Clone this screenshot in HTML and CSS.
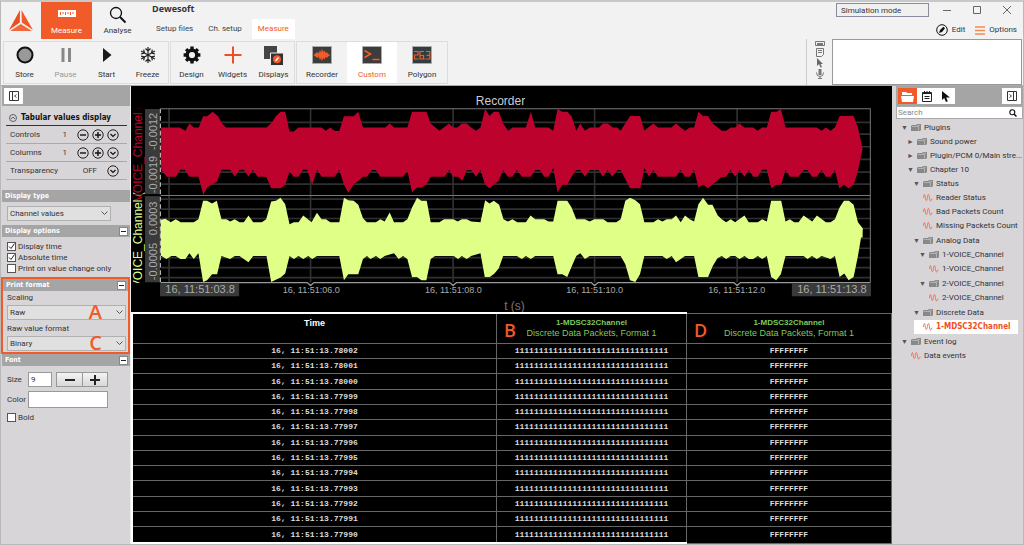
FILE: index.html
```html
<!DOCTYPE html>
<html lang="en">

<head>
    <meta charset="UTF-8">
    <meta name="viewport" content="width=device-width, initial-scale=1.0">
    <title>Dewesoft</title>
    <link rel="stylesheet" href="styles.css">
</head>

<body>
    <!-- icons used more than once -->
    <svg class="sprite" width="0" height="0">
        <symbol id="i-minus" viewBox="0 0 12 12"><circle cx="6" cy="6" r="5.2" fill="none" stroke="#222" /><path d="M3 6h6" stroke="#111" stroke-width="1.4" /></symbol>
        <symbol id="i-plus" viewBox="0 0 12 12"><circle cx="6" cy="6" r="5.2" fill="none" stroke="#222" /><path d="M3 6h6M6 3v6" stroke="#111" stroke-width="1.4" /></symbol>
        <symbol id="i-down" viewBox="0 0 12 12"><circle cx="6" cy="6" r="5.2" fill="none" stroke="#222" /><path d="M3.5 5L6 7.5L8.5 5" fill="none" stroke="#111" stroke-width="1.2" /></symbol>
        <symbol id="i-folder" viewBox="0 0 10 9"><path d="M0 3l1-1h4l1-1h4v6l-1 1H0z" fill="#888" /><path d="M1 3.500h6.500v4M6 2.300h3" fill="none" stroke="#c4c4c4" stroke-width=".7" /></symbol>
        <symbol id="i-wave" viewBox="0 0 10 9"><path d="M.5 5C.7 .5 2 .5 2.300 4.500S4 8.500 4.400 4.500S6 .5 6.400 4.500S8 9 8.400 6.500L9.500 6" fill="none" stroke="#ee6a4c" stroke-width=".9" /></symbol>
        <symbol id="i-panel" viewBox="0 0 10 10"><path d="M.5.5h9v9h-9zM3.500.5v9" fill="none" stroke="#333" /><path d="M7.500 3.500L5.500 5L7.500 6.500" fill="none" stroke="#333" stroke-width=".9" /></symbol>
    </svg>

    <header class="header">
        <svg class="logo" viewBox="0 0 24 21"><path d="M11 0L10.800 12.500L0 20z" fill="#e8501f" /><path d="M12.500 0L12.800 12.500L24 20z" fill="#f15a29" /><path d="M1 21L11.800 14L23 21z" fill="#f0683c" /></svg>
        <nav class="modes">
            <button class="mode active">
                <svg width="18" height="7" viewBox="0 0 18 7"><path d="M0 0h18v7H0z" fill="#fff" /><path d="M2.500 2v3M5 2v2M7.500 2v3M10 2v2M12.500 2v3M15 2v2" stroke="#f15a29" /></svg>
                <span>Measure</span>
            </button>
            <button class="mode">
                <svg width="18" height="18" viewBox="0 0 18 18"><circle cx="7" cy="7" r="5.500" fill="none" stroke="#111" stroke-width="1.3" /><path d="M11 11L16.500 16.500" stroke="#111" stroke-width="2" /></svg>
                <span>Analyse</span>
            </button>
        </nav>
        <div class="project">
            <h1>Dewesoft</h1>
            <nav class="tabs">
                <a href="#">Setup files</a>
                <a href="#">Ch. setup</a>
                <a href="#" class="active">Measure</a>
            </nav>
        </div>
        <div class="window">
            <div class="window-bar">
                <input type="text" value="Simulation mode" aria-label="Operation mode" readonly>
                <button aria-label="Minimize"><svg width="8" height="8"><path d="M0 4.500h8" stroke="#666" /></svg></button>
                <button aria-label="Maximize"><svg width="8" height="8"><path d="M.5.5h7v7h-7z" fill="none" stroke="#666" /></svg></button>
                <button aria-label="Close"><svg width="8" height="8"><path d="M0 0L8 8M8 0L0 8" stroke="#666" /></svg></button>
            </div>
            <div class="window-menu">
                <button><svg width="12" height="12" viewBox="0 0 12 12"><circle cx="6" cy="6" r="5.300" fill="none" stroke="#111" /><path d="M3 9L4 6L7.500 2.800L9 4.300L6 8z" fill="#111" /></svg>Edit</button>
                <button><svg width="10" height="9"><path d="M0 1h10M0 4.500h10M0 8h10" stroke="#f58a55" stroke-width="1.500" /></svg>Options</button>
            </div>
        </div>
    </header>

    <div class="toolbar">
        <div class="group">
            <button><svg width="18" height="18" viewBox="0 0 18 18"><circle cx="9" cy="9" r="7.500" fill="#999" stroke="#111" stroke-width="2" /></svg><span>Store</span></button>
            <button class="disabled"><svg width="18" height="18" viewBox="0 0 18 18"><path d="M4.500 2h3v14h-3zM11 2h3v14h-3z" fill="#888" /></svg><span>Pause</span></button>
            <button><svg width="18" height="18" viewBox="0 0 18 18"><path d="M5 2L13.500 9L5 16z" fill="#1a1a1a" /></svg><span>Start</span></button>
            <button><svg width="18" height="18" viewBox="0 0 18 18"><g fill="none" stroke="#222" stroke-width="1.2"><path id="arm" d="M9 1v16M6.500 2.500L9 5L11.500 2.500M6.500 15.500L9 13L11.500 15.500" /><use href="#arm" transform="rotate(60 9 9)" /><use href="#arm" transform="rotate(120 9 9)" /></g></svg><span>Freeze</span></button>
        </div>
        <div class="group">
            <button><svg width="18" height="18" viewBox="0 0 18 18"><circle cx="9" cy="9" r="4.800" fill="none" stroke="#111" stroke-width="3.400" /><path d="M9 .6v3M9 14.400v3M.6 9h3M14.400 9h3M3.100 3.100l2 2M12.900 12.900l2 2M14.900 3.100l-2 2M5.100 12.900l-2 2" stroke="#111" stroke-width="3.400" /></svg><span>Design</span></button>
            <button><svg width="18" height="18" viewBox="0 0 18 18"><path d="M9 .5v17M.5 9h17" stroke="#f04f23" stroke-width="2" /></svg><span>Widgets</span></button>
            <button><svg width="20" height="20" viewBox="0 0 20 20"><path d="M0 0h13v13H0z" fill="#444" /><path d="M6.500 7h13v12.500h-13z" fill="#333" stroke="#eee" /><circle cx="13" cy="13.200" r="4" fill="#f15a29" /><path d="M11.500 15L14.500 11.500" stroke="#fff" stroke-width="1.200" /></svg><span>Displays</span></button>
        </div>
        <div class="group wide">
            <button><svg width="20" height="18" viewBox="0 0 20 18"><path d="M.5.5h19v17H.5z" fill="#3c3c3c" stroke="#aaa" /><path d="M1.500 9L4 7L5.500 6L6.500 7.500L8 4L9 6.500L10 2.500L11 6L12.500 4.500L13.500 7L15 6L16 8L18.500 9L16 10.500L15 12L13.500 11L12.500 13.500L11 12L10 15.500L9 12L8 14L6.500 10.500L5.500 12L4 11z" fill="#f15a29" /></svg><span>Recorder</span></button>
            <button class="active"><svg width="20" height="18" viewBox="0 0 20 18"><path d="M.5.5h19v17H.5z" fill="#3c3c3c" stroke="#aaa" /><path d="M2.500 4.500L8.500 8L2.500 11.500M10.500 13.500h7" fill="none" stroke="#f15a29" stroke-width="1.700" /></svg><span>Custom</span></button>
            <button><svg width="20" height="18" viewBox="0 0 20 18"><path d="M.5.5h19v17H.5z" fill="#333c3e" stroke="#aaa" /><path d="M2 5.500h4v3.500H2.500v4h4M12 5.500H8v7.500h3.500V9.500H8M12.800 12.500v1M14 5.500h3.800v7.500H14M14.500 9.300h3.300" fill="none" stroke="#f15a29" stroke-width="1.200" /></svg><span>Polygon</span></button>
        </div>
        <div class="notes">
            <svg width="12" height="42" viewBox="0 0 12 42" fill="none" stroke="#777"><path d="M1.500 2.500h9v4h-9zM3 4.500h6M3 5.500h6" /><path d="M2.500 9.500h7v6l-2 2h-5zM4 11.500h4M4 13.500h4" /><path d="M3 19v8l2-2 1.500 3.500L8 28l-1.500-3H9z" fill="#666" stroke="none" /><path d="M4.500 30h3v6h-3z" fill="#777" stroke="none" /><path d="M2.500 33.500q0 4 3.500 4t3.500-4M6 37.500v2.500M4 39.500h4" /></svg>
            <textarea aria-label="Notes"></textarea>
        </div>
    </div>

    <main class="workspace">
        <aside class="settings">
            <div class="side-bar"><button class="tool" aria-label="Collapse panel"><svg width="10" height="10"><use href="#i-panel" /></svg></button></div>

            <section class="widget">
                <h2><svg width="8" height="8" viewBox="0 0 8 8"><circle cx="4" cy="4" r="3.500" fill="none" stroke="#444" stroke-width=".8" /><path d="M2 5L4 3L6 5" fill="none" stroke="#444" stroke-width=".8" /></svg>Tabular values display</h2>
                <div class="prop"><span>Controls</span><output>1</output>
                    <button aria-label="Fewer controls"><svg width="12" height="12"><use href="#i-minus" /></svg></button><button aria-label="More controls"><svg width="12" height="12"><use href="#i-plus" /></svg></button><button aria-label="Controls list"><svg width="12" height="12"><use href="#i-down" /></svg></button>
                </div>
                <div class="prop"><span>Columns</span><output>1</output>
                    <button aria-label="Fewer columns"><svg width="12" height="12"><use href="#i-minus" /></svg></button><button aria-label="More columns"><svg width="12" height="12"><use href="#i-plus" /></svg></button><button aria-label="Columns list"><svg width="12" height="12"><use href="#i-down" /></svg></button>
                </div>
                <div class="prop"><span>Transparency</span><output>OFF</output>
                    <button aria-label="Transparency list"><svg width="12" height="12"><use href="#i-down" /></svg></button>
                </div>
            </section>

            <section>
                <h3 id="display-type">Display type</h3>
                <div class="fields type">
                    <select aria-labelledby="display-type"><option>Channel values</option></select>
                </div>
            </section>

            <section>
                <h3>Display options <button class="fold" aria-label="Collapse"></button></h3>
                <div class="fields checks">
                    <label><input type="checkbox" checked>Display time</label>
                    <label><input type="checkbox" checked>Absolute time</label>
                    <label><input type="checkbox">Print on value change only</label>
                </div>
            </section>

            <section class="marked">
                <h3>Print format <button class="fold" aria-label="Collapse"></button></h3>
                <div class="fields formats">
                    <label for="scaling">Scaling</label>
                    <div class="picker"><select id="scaling"><option>Raw</option></select><span class="mark">A</span></div>
                    <label for="raw-format">Raw value format</label>
                    <div class="picker"><select id="raw-format"><option>Binary</option></select><span class="mark">C</span></div>
                </div>
            </section>

            <section>
                <h3>Font <button class="fold" aria-label="Collapse"></button></h3>
                <div class="fields font">
                    <div class="field"><label for="size">Size</label><input type="text" id="size" value="9">
                        <div class="stepper"><button aria-label="Smaller"><svg width="10" height="10"><path d="M0 5h10" stroke="#222" stroke-width="2" /></svg></button><button aria-label="Larger"><svg width="10" height="10"><path d="M0 5h10M5 0v10" stroke="#222" stroke-width="2" /></svg></button></div>
                    </div>
                    <div class="field"><label for="color">Color</label><input type="text" id="color"></div>
                    <label class="check"><input type="checkbox">Bold</label>
                </div>
            </section>
        </aside>

        <div class="display">
            <svg class="recorder" viewBox="0 0 760 226" role="img" aria-label="Recorder">
                <text class="title" x="369" y="19">Recorder</text>
                <rect x="14" y="23" width="15" height="85" fill="#3a3a3a" />
                <rect x="14" y="110" width="15" height="86" fill="#3a3a3a" />
                <!-- plot area, drawn on a grid of a third of a pixel -->
                <svg viewBox="9 6 2280 678" width="760" height="226">
                    <path class="grid" d="M98 115H2224M98 150H2224M98 188H2224M98 226H2224M98 264H2224M98 300H2224M98 345H2224M98 375H2224M98 403H2224M98 433H2224M98 463H2224M98 492H2224M98 520H2224M98 550H2224M98 580H2224M123 75V595M547 75V595M974 75V595M1398 75V595M1825 75V595" />
                    <path fill="#bc022d" d="M98 195V130H155L172 140L184 118L197 130H212L225 97H237L254 83L270 97L280 115L293 130H415L430 117L443 97L457 83H471L484 142H497L510 130H580L593 140L606 130L620 141H633L647 97H676L690 83L704 130H771L784 118L797 130H837L851 83H894L907 118L933 140L962 118L974 130H987L1000 118H1015L1028 130L1043 140L1056 130L1070 75L1083 96L1096 83H1111L1124 118L1139 140L1152 130H1192L1207 83L1220 130H1260L1274 140L1287 75L1301 83H1316L1329 97L1343 140L1355 118L1369 140L1383 130H1411L1423 118H1438L1452 130H1466L1476 140L1504 96H1534L1547 139L1574 118L1588 130H1628L1642 118L1656 130L1669 140L1683 130H1696L1709 83L1723 96H1738L1752 118L1779 140H1792L1806 130H1819L1832 118L1846 130H1873L1886 140L1900 130H1914L1927 83H1944L1956 75L1970 130H2064L2078 140L2091 130L2105 140L2118 130L2132 96H2174L2187 130L2201 195Z" />
                    <path fill="#bc022d" d="M98 194V255L116 278H143L157 257H170L184 278H211L226 332L237 310L267 292L280 257H306L320 278L334 257H347L361 278L374 257L388 278H414L429 312H457L471 302L484 262L497 278H511L524 257H537L552 302L566 257L580 278H620L633 257L647 302L660 326L676 302L704 278H716L730 258H743L756 278H824L837 260L851 325L866 310H879L894 302L907 278H949L962 258L974 278H989L1002 290L1015 258H1028L1043 278L1056 258L1070 302L1083 312L1111 290L1124 258L1138 278H1152L1165 258L1180 278H1207L1220 258H1234L1247 278H1260L1274 252L1287 325L1301 302H1316L1329 278L1343 258H1355L1369 278L1383 258H1410L1423 278L1437 258L1451 278L1466 258H1476L1504 312H1535L1547 252L1561 278L1574 258L1588 278H1642L1655 258L1669 278H1683L1696 258L1709 310L1723 302L1738 312L1776 280L1792 278L1805 258L1819 278L1832 258L1847 278L1860 258L1873 278H1887L1900 257H1914L1927 312L1943 302H1957L1970 258L1983 278H2009L2024 258H2036L2049 278H2064L2078 258L2091 278H2105L2118 258L2131 312L2145 302L2159 312L2174 302L2187 260L2201 194Z" />
                    <path fill="#dfff86" d="M98 460V407L112 404L128 414L143 405L158 414H197L211 405L225 350H237L252 358L266 350L280 405H295L306 412L320 405L334 414H347L361 394L375 414H401L414 405L429 352L443 350L457 341L471 360L484 420L497 414H511L525 394L550 414L566 386L580 405H593L606 414H633L647 341L660 348L676 350L690 362L704 402L716 414H743L756 405L769 412L784 385L797 414H824L837 405L851 370L866 341L879 350H895L907 414H933L947 405H975L988 412L1000 405H1015L1028 412L1056 414L1070 348L1083 358L1096 350L1112 362L1125 405L1138 412L1152 405L1166 414H1192L1206 394L1220 405H1247L1260 412H1274L1287 350H1316L1329 370L1343 405H1369L1383 412L1397 405H1424L1437 414H1463L1476 405L1490 350L1504 341L1520 348L1534 360L1547 414H1574L1588 405L1601 412L1614 405H1629L1642 394L1656 414L1669 394L1683 405L1696 412L1709 360L1723 341L1738 362H1751L1767 394L1779 405L1792 414L1806 405L1819 414L1847 394L1860 414H1887L1900 405L1914 412L1927 350H1957L1970 412L1983 405L1996 414H2009L2024 394L2050 412L2064 394L2091 414H2105L2118 405L2132 370L2145 350H2160L2174 362L2187 414L2201 432V460Z" />
                    <path fill="#dfff86" d="M98 432V514L115 524L130 515H143L157 524H172L184 507L197 524L211 507L225 593L237 588L252 570H267L280 515L306 524L320 515H334L361 534L375 515H415L429 593L457 580L471 568L484 515L497 524L511 515L525 524L540 515L552 524L566 515H633L647 588L660 570H690L704 524L716 515L726 524L743 515L756 524L769 515L797 507L811 524L824 515L837 524L851 578H866L879 588H894L907 524L920 515H976L989 524L1000 515L1015 524L1028 515L1056 507L1069 578H1084L1098 568L1111 552L1124 515H1165L1180 524L1192 515L1207 524L1220 515H1274L1287 570H1301L1316 578L1330 545L1343 515L1355 507L1369 524L1383 515H1476L1490 540L1504 588L1520 593L1534 570L1547 515H1601L1614 524L1629 515L1642 534L1656 524L1669 515H1696L1709 578H1738L1752 545L1766 522L1779 515L1792 524L1806 515H1819L1832 524L1847 515L1860 524H1873L1887 515L1900 524L1914 515L1927 578L1942 588L1956 570L1970 515H2024L2036 524L2049 515L2064 524L2078 515L2105 524L2118 515L2132 578L2146 568L2159 588L2174 578L2187 515L2201 432Z" />
                    <path fill="none" stroke="#777" stroke-width="3" d="M98 74H2224V595M98 334H2224" />
                    <path fill="none" stroke="#999" stroke-width="4" d="M98 595H537L547 604L557 595H964L974 604L984 595H1388L1398 604L1408 595H1815L1825 604L1835 595H2224" />
                    <path stroke="#ccc" stroke-width="3" stroke-dasharray="14 8" d="M97 74V595" />
                </svg>
                <clipPath id="names"><path d="M0 22h14v86H0zM0 109h14v88H0z" /></clipPath>
                <g clip-path="url(#names)" class="channel">
                    <text transform="translate(11 115) rotate(-90)">VOICE_Channel (</text>
                    <text transform="translate(11 202) rotate(-90)">VOICE_Channel (</text>
                </g>
                <g class="scale">
                    <text transform="translate(26 64) rotate(-90)">-0.0012</text>
                    <text transform="translate(26 107) rotate(-90)">-0.0019</text>
                    <text transform="translate(26 149) rotate(-90)">0.0003</text>
                    <text transform="translate(26 194) rotate(-90)">-0.0005</text>
                </g>
                <rect x="29" y="197" width="79" height="13" fill="#3a3a3a" />
                <rect x="660" y="197" width="79" height="13" fill="#3a3a3a" />
                <text class="edge" x="69" y="207">16, 11:51:03.8</text>
                <text class="edge" x="700" y="207">16, 11:51:13.8</text>
                <g class="ticks">
                    <text x="180" y="207">16, 11:51:06.0</text>
                    <text x="322" y="207">16, 11:51:08.0</text>
                    <text x="463" y="207">16, 11:51:10.0</text>
                    <text x="605" y="207">16, 11:51:12.0</text>
                </g>
                <text class="axis" x="383" y="224">t (s)</text>
            </svg>

            <table class="values">
                <thead>
                    <tr>
                        <th>Time</th>
                        <th class="channel-head"><span class="mark">B</span><b>1-MDSC32Channel</b>Discrete Data Packets, Format 1</th>
                        <th class="channel-head"><span class="mark">D</span><b>1-MDSC32Channel</b>Discrete Data Packets, Format 1</th>
                    </tr>
                </thead>
                <tbody>
                    <tr><td>16, 11:51:13.78002</td><td>11111111111111111111111111111111</td><td>FFFFFFFF</td></tr>
                    <tr><td>16, 11:51:13.78001</td><td>11111111111111111111111111111111</td><td>FFFFFFFF</td></tr>
                    <tr><td>16, 11:51:13.78000</td><td>11111111111111111111111111111111</td><td>FFFFFFFF</td></tr>
                    <tr><td>16, 11:51:13.77999</td><td>11111111111111111111111111111111</td><td>FFFFFFFF</td></tr>
                    <tr><td>16, 11:51:13.77998</td><td>11111111111111111111111111111111</td><td>FFFFFFFF</td></tr>
                    <tr><td>16, 11:51:13.77997</td><td>11111111111111111111111111111111</td><td>FFFFFFFF</td></tr>
                    <tr><td>16, 11:51:13.77996</td><td>11111111111111111111111111111111</td><td>FFFFFFFF</td></tr>
                    <tr><td>16, 11:51:13.77995</td><td>11111111111111111111111111111111</td><td>FFFFFFFF</td></tr>
                    <tr><td>16, 11:51:13.77994</td><td>11111111111111111111111111111111</td><td>FFFFFFFF</td></tr>
                    <tr><td>16, 11:51:13.77993</td><td>11111111111111111111111111111111</td><td>FFFFFFFF</td></tr>
                    <tr><td>16, 11:51:13.77992</td><td>11111111111111111111111111111111</td><td>FFFFFFFF</td></tr>
                    <tr><td>16, 11:51:13.77991</td><td>11111111111111111111111111111111</td><td>FFFFFFFF</td></tr>
                    <tr><td>16, 11:51:13.77990</td><td>11111111111111111111111111111111</td><td>FFFFFFFF</td></tr>
                </tbody>
            </table>
        </div>

        <aside class="channels">
            <div class="side-bar">
                <button class="tool active" aria-label="Channels"><svg width="13" height="11" viewBox="0 0 13 11"><path d="M1 4V1h4l1 1h5v2z" fill="#fff" /><path d="M0 5h13l-1 6H1z" fill="#fff" /></svg></button>
                <button class="tool" aria-label="Events"><svg width="10" height="11" viewBox="0 0 10 11"><path d="M.5 1.500h9v9h-9z" fill="none" stroke="#222" /><path d="M1 2.500h8M2.500 5.500h5M2.500 7.500h5M2.500 0v3M5 0v3M7.500 0v3" stroke="#222" /></svg></button>
                <button class="tool" aria-label="Select"><svg width="8" height="11" viewBox="0 0 8 11"><path d="M0 0v9l2.200-2L4 11l1.800-.8L4.200 6.500H8z" fill="#111" /></svg></button>
                <button class="tool last" aria-label="Collapse panel"><svg class="flip" width="10" height="10"><use href="#i-panel" /></svg></button>
            </div>
            <div class="search">
                <input type="text" placeholder="Search" aria-label="Search">
                <svg width="8" height="8" viewBox="0 0 8 8"><circle cx="3.300" cy="3.300" r="2.500" fill="none" stroke="#111" stroke-width="1.100" /><path d="M5 5L7.500 7.500" stroke="#111" stroke-width="1.500" /></svg>
            </div>
            <ul class="tree">
                <li class="open"><svg><use href="#i-folder" /></svg>Plugins
                    <ul>
                        <li class="closed"><svg><use href="#i-folder" /></svg>Sound power</li>
                        <li class="closed"><svg><use href="#i-folder" /></svg>Plugin/PCM 0/Main stre...</li>
                        <li class="open"><svg><use href="#i-folder" /></svg>Chapter 10
                            <ul>
                                <li class="open"><svg><use href="#i-folder" /></svg>Status
                                    <ul class="leaves">
                                        <li><svg><use href="#i-wave" /></svg>Reader Status</li>
                                        <li><svg><use href="#i-wave" /></svg>Bad Packets Count</li>
                                        <li><svg><use href="#i-wave" /></svg>Missing Packets Count</li>
                                    </ul>
                                </li>
                                <li class="open"><svg><use href="#i-folder" /></svg>Analog Data
                                    <ul>
                                        <li class="open"><svg><use href="#i-folder" /></svg>1-VOICE_Channel
                                            <ul class="leaves">
                                                <li><svg><use href="#i-wave" /></svg>1-VOICE_Channel</li>
                                            </ul>
                                        </li>
                                        <li class="open"><svg><use href="#i-folder" /></svg>2-VOICE_Channel
                                            <ul class="leaves">
                                                <li><svg><use href="#i-wave" /></svg>2-VOICE_Channel</li>
                                            </ul>
                                        </li>
                                    </ul>
                                </li>
                                <li class="open"><svg><use href="#i-folder" /></svg>Discrete Data
                                    <ul class="leaves">
                                        <li class="selected"><svg><use href="#i-wave" /></svg>1-MDSC32Channel</li>
                                    </ul>
                                </li>
                            </ul>
                        </li>
                    </ul>
                </li>
                <li class="open"><svg><use href="#i-folder" /></svg>Event log
                    <ul class="leaves">
                        <li><svg><use href="#i-wave" /></svg>Data events</li>
                    </ul>
                </li>
            </ul>
        </aside>
    </main>
</body>

</html>
```
FILE: styles.css
```css
* {
    box-sizing: border-box;
}

body {
    display: flex;
    flex-direction: column;
    min-height: 100vh;
    margin: 0;
    border: 1px solid #b9b9b9;
    border-top: 2px solid #c8c8c8;
    background-color: #f2f2f2;
    font-family: Roboto, "Open Sans", sans-serif;
    font-size: 8px;
    line-height: 10px;
    color: #333;
}

button,
input,
select,
textarea {
    margin: 0;
    padding: 0;
    border: none;
    border-radius: 0;
    background: none;
    font: inherit;
    color: inherit;
}

button {
    display: flex;
    align-items: center;
    justify-content: center;
}

svg {
    display: block;
    flex: none;
}

.sprite {
    position: absolute;
}

h1,
h2,
h3,
ul {
    margin: 0;
    padding: 0;
}

h2,
h3,
.tree .selected {
    font-family: "DejaVu Sans Condensed", "DejaVu Sans", sans-serif;
}

.header {
    display: flex;
    height: 37px;
}

.logo {
    width: 24px;
    height: 21px;
    margin: 8px 8px 0;
}

.modes {
    display: flex;
}

.mode {
    flex-direction: column;
    justify-content: flex-end;
    width: 51px;
    gap: 2px;
    padding-bottom: 3px;
}

.mode.active {
    background-color: #f15a29;
    color: #fff;
    gap: 9px;
}

.project {
    display: flex;
    flex-direction: column;
    justify-content: space-between;
    padding: 1px 0 0 8px;
}

h1 {
    padding-left: 1px;
    font-family: "Open Sans", "Noto Sans", sans-serif;
    font-size: 9px;
    line-height: 12px;
}

.tabs {
    display: flex;
    gap: 5px;
}

.tabs a {
    padding: 5px;
    color: #444;
    text-decoration: none;
}

.tabs a.active {
    padding: 5px 6px;
    background-color: #fff;
    color: #f15a29;
}

.window {
    display: flex;
    flex-direction: column;
    align-items: flex-end;
    gap: 7px;
    margin-left: auto;
    padding: 1px 6px 0 0;
}

.window-bar {
    display: flex;
    align-items: center;
    gap: 22px;
    padding-right: 6px;
}

.window-bar input {
    width: 93px;
    height: 14px;
    margin-right: -8px;
    padding-left: 4px;
    border: 1px solid #8c8ca0;
    background-color: #f0f0f0;
}

.window-menu {
    display: flex;
    gap: 10px;
}

.window-menu button {
    gap: 4px;
}

.toolbar {
    display: flex;
    gap: 1px;
    height: 47px;
    padding-left: 2px;
    border-bottom: 1px solid #aaa;
}

.group {
    display: flex;
    height: 43px;
    margin-top: 2px;
    border: 1px solid #ddd;
}

.group button {
    flex-direction: column;
    justify-content: space-between;
    width: 41px;
    padding: 4px 0 3px;
}

.group.wide button {
    width: 50px;
}

.group .active {
    background-color: #fff;
    color: #f15a29;
}

.group .disabled {
    color: #999;
}

.notes {
    display: flex;
    gap: 6px;
    margin-left: auto;
    padding: 0 1px 0 7px;
    border-left: 1px solid #ccc;
}

.notes textarea {
    width: 190px;
    height: 46px;
    border: 1px solid #999;
    background-color: #fff;
    resize: none;
}

.workspace {
    display: flex;
    flex: 1;
    background-color: #d8d5d8;
}

.settings {
    width: 130px;
    padding-left: 1px;
    border-right: 1px solid #eee;
}

.side-bar {
    display: flex;
    align-items: center;
    height: 20px;
    padding: 0 2px;
    background-color: #a5a5a5;
}

.tool {
    width: 19px;
    height: 16px;
    background-color: #fff;
}

.widget {
    padding: 5px 3px 10px 4px;
}

h2 {
    display: flex;
    align-items: center;
    gap: 4px;
    height: 15px;
    padding-left: 3px;
    border-bottom: 1px solid #333;
    font-size: 8px;
    color: #111;
}

.prop {
    display: flex;
    align-items: center;
    gap: 3px;
    height: 18px;
    padding: 0 8px 0 4px;
    border-bottom: 1px solid #aaa;
}

.prop output {
    margin: 0 7px 0 auto;
}

h3 {
    display: flex;
    align-items: center;
    justify-content: space-between;
    height: 12px;
    padding: 0 2px 0 3px;
    background-color: #a5a5a5;
    font-size: 7px;
    color: #fff;
}

.fold {
    width: 9px;
    height: 9px;
    border: 1px solid #888;
    background: linear-gradient(#222, #222) center / 5px 1px no-repeat #fff;
}

.fields {
    padding: 4px 5px;
}

.fields.type {
    padding-right: 19px;
}

select {
    display: block;
    width: 100%;
    height: 15px;
    padding-left: 2px;
    border: 1px solid #b0b0b0;
    appearance: none;
    background: url('data:image/svg+xml,<svg xmlns="http://www.w3.org/2000/svg" width="7" height="5"><path d="M.5.5l3 3l3-3" fill="none" stroke="%23555"/></svg>') right 2px center no-repeat #e0e0e0;
}

.fields.checks {
    padding-bottom: 3px;
}

.checks label,
.check {
    display: flex;
    align-items: center;
    gap: 2px;
    height: 11px;
}

input[type="checkbox"] {
    width: 9px;
    height: 9px;
    border: 1px solid #555;
    appearance: none;
    background-color: #fff;
}

input[type="checkbox"]:checked {
    background-image: url('data:image/svg+xml,<svg xmlns="http://www.w3.org/2000/svg" width="7" height="7"><path d="M1 3.500l2 2l3.500-5" fill="none" stroke="%23222"/></svg>');
}

.marked {
    margin-left: -1px;
    border: 2px solid #f15a29;
}

.formats {
    padding: 2px 2px 1px 4px;
}

.formats label {
    display: block;
    height: 12px;
}

.picker {
    position: relative;
}

.picker + label {
    margin-top: 4px;
}

.mark {
    position: absolute;
    font-family: "Open Sans", "Noto Sans", sans-serif;
    font-size: 20px;
    font-weight: 600;
    line-height: 20px;
    color: #f15a29;
}

.picker .mark {
    top: -3px;
    right: 24px;
}

.font {
    display: flex;
    flex-direction: column;
    gap: 4px;
    padding-top: 6px;
}

.field {
    display: flex;
    align-items: center;
}

.field label {
    width: 21px;
}

.field input {
    width: 24px;
    height: 15px;
    padding-left: 2px;
    border: 1px solid #999;
    background-color: #fff;
}

.field #color {
    width: 80px;
    height: 17px;
}

.stepper {
    display: flex;
    margin-left: 4px;
    border: 1px solid #999;
}

.stepper button {
    width: 25px;
    height: 13px;
    background: linear-gradient(#f4f4f4, #d8d8d8);
}

.stepper button + button {
    border-left: 1px solid #999;
}

.display {
    display: flex;
    flex: 1;
    flex-direction: column;
    min-width: 0;
    background-color: #000;
}

.recorder {
    width: 100%;
    font-family: "Liberation Sans", Arial, sans-serif;
    font-size: 10px;
}

.recorder text {
    fill: #aaa;
}

.recorder .title,
.recorder .axis {
    text-anchor: middle;
    font-size: 12px;
}

.recorder .title {
    fill: #ccc;
}

.recorder .axis {
    fill: #777;
}

.recorder .grid {
    fill: none;
    stroke: #303030;
    stroke-width: 5;
}

.recorder .channel text {
    font-size: 12px;
}

.recorder .channel text:first-child {
    fill: #bc022d;
}

.recorder .channel text:last-child {
    fill: #dfff86;
}

.recorder .scale text {
    font-size: 11px;
}

.recorder .edge {
    text-anchor: middle;
    font-size: 11px;
}

.recorder .ticks text {
    text-anchor: middle;
    font-size: 9px;
}

.values {
    flex: 1;
    width: 100%;
    height: 230px;
    border: 1px solid #777;
    border-collapse: collapse;
    table-layout: fixed;
    font-family: "Liberation Mono", monospace;
    font-size: 8px;
    font-weight: 700;
    text-align: center;
    color: #ddd;
}

.values th,
.values td {
    padding: 0;
    border: 1px solid #666;
}

.values th {
    position: relative;
    height: 30px;
    padding-top: 4px;
    font-family: "Liberation Sans", Arial, sans-serif;
    font-size: 9px;
    vertical-align: top;
    color: #fff;
}

.values th:first-child {
    width: 48%;
}

.values th:last-child {
    width: 27%;
}

/* the selected group of columns has a white frame */
.values th:nth-child(-n+2) {
    border-top: 2px solid #fff;
}

.values tr > :first-child {
    border-left: 2px solid #fff;
}

.values tbody tr:last-child td:nth-child(-n+2) {
    border-bottom: 2px solid #fff;
}

.values .channel-head {
    font-weight: 400;
    color: #7fc95a;
}

.values b {
    display: block;
    font-size: 8px;
}

.values .mark {
    top: 6px;
    left: 7px;
    font-size: 18px;
}

.channels {
    width: 131px;
    padding-left: 4px;
}

.channels .side-bar .last {
    margin-left: auto;
}

.tool.active {
    background-color: #f15a29;
}

.flip {
    transform: scaleX(-1);
}

.search {
    display: flex;
    align-items: center;
    justify-content: space-between;
    height: 13px;
    padding: 0 5px 0 1px;
    border: 1px solid #aaa;
    background-color: #fff;
}

.search input {
    flex: 1;
    min-width: 0;
}

.search input::placeholder {
    color: #888;
}

.tree {
    padding: 2px 0 0 15px;
    line-height: 14px;
    list-style: none;
    white-space: nowrap;
}

.tree ul {
    padding-left: 6px;
    list-style: none;
}

.tree .leaves {
    padding: 0 0 1px;
}

.tree svg {
    display: inline-block;
    width: 10px;
    height: 9px;
    margin-right: 3px;
    vertical-align: middle;
}

.tree .open::before,
.tree .closed::before {
    content: "▼";
    display: inline-block;
    width: 10px;
    margin-left: -10px;
    font-size: 7px;
    color: #555;
}

.tree .closed::before {
    content: "►";
}

.tree .selected {
    width: max-content;
    margin-left: -9px;
    padding: 0 8px 0 9px;
    background-color: #fff;
    font-weight: 700;
    color: #f04f23;
}
```
